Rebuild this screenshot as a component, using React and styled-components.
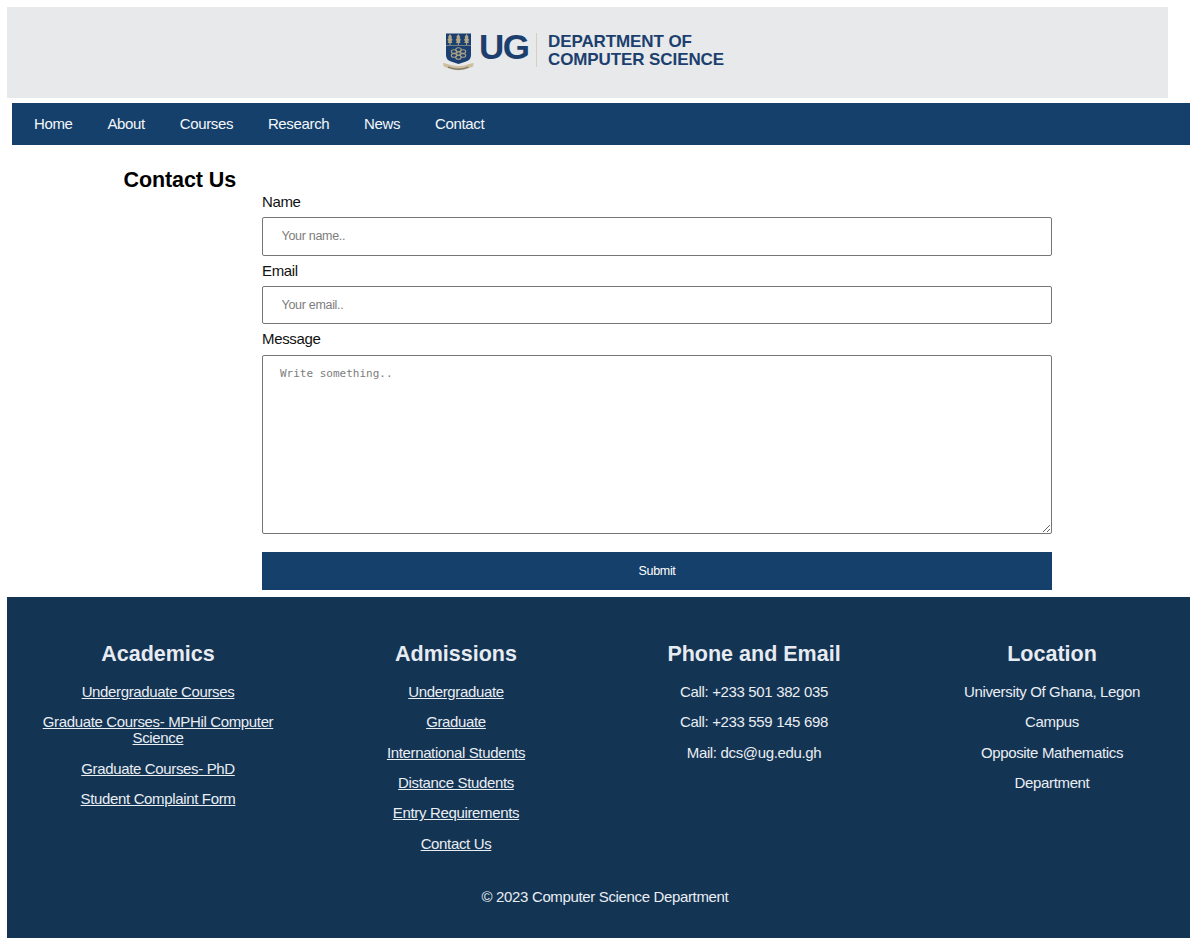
import React from "react";
import styled, { createGlobalStyle } from "styled-components";

const GlobalStyle = createGlobalStyle`
  * { box-sizing: border-box; }
  body {
    margin: 0;
    background: #fff;
    color: #111;
    font-family: "Liberation Sans", Arial, sans-serif;
    font-size: 15px;
    line-height: 16px;
    letter-spacing: -0.35px;
  }
`;

const Page = styled.div`
  padding: 7px 0 5px 7px;
  height: 943px;
  overflow: hidden;
`;

const Header = styled.header`
  width: 1161px;
  height: 91px;
  padding: 24px 0 0 435px;
  background: #e7e9eb;
  display: flex;
  align-items: flex-start;
  color: #1c3f6e;
  font-weight: bold;
`;

const Crest = styled.svg`
  width: 32px;
  height: 40px;
  flex: none;
`;

const Initials = styled.span`
  width: 57px;
  padding: 0 0 0 5px;
  font-size: 35px;
  line-height: 32px;
  letter-spacing: -1.5px;
`;

const Divider = styled.span`
  width: 1px;
  height: 34px;
  margin: 2px 11px 0 5px;
  background: #d6d0c0;
`;

const DepartmentName = styled.div`
  margin-top: 2px;
  font-size: 17px;
  line-height: 18px;
  letter-spacing: -0.1px;
  white-space: nowrap;
`;

const Nav = styled.nav`
  height: 42px;
  margin: 5px 0 0 5px;
  padding: 0 0 1px 22px;
  background: #14406b;
  display: flex;
  align-items: center;
  gap: 34.8px;
`;

const NavLink = styled.a`
  color: #f4f7fa;
`;

const Main = styled.main`
  height: 452px;
  padding: 23px 0 0 116.5px;
  display: flex;
  align-items: flex-start;
`;

const Title = styled.h2`
  width: 138.5px;
  margin: 0;
  color: #000;
  font-size: 21.5px;
  line-height: 24px;
  letter-spacing: -0.1px;
`;

const Form = styled.form`
  width: 790px;
  padding-top: 26px;
  display: flex;
  flex-direction: column;
`;

const Label = styled.label`
  height: 16px;
  line-height: 16px;
`;

const Input = styled.input`
  height: 38.6px;
  margin: 7px 0;
  padding: 0 18.5px;
  border: 1px solid #767676;
  border-radius: 2px;
  font: 12.5px "Liberation Sans", Arial, sans-serif;
  letter-spacing: -0.3px;
  &::placeholder { color: #7d7d7d; }
`;

const TextArea = styled.textarea`
  height: 179px;
  margin: 7.4px 0 18px;
  padding: 11px 17px;
  border: 1px solid #767676;
  border-radius: 2px;
  font: 11px/14px "DejaVu Sans Mono", monospace;
  letter-spacing: 0;
  resize: vertical;
  &::placeholder { color: #7d7d7d; }
`;

const Submit = styled.button`
  height: 38px;
  padding: 0;
  border: 0;
  background: #14406b;
  color: #fff;
  font: 12.5px "Liberation Sans", Arial, sans-serif;
  letter-spacing: -0.3px;
`;

const Footer = styled.footer`
  height: 341px;
  padding: 45px 0 0 2px;
  background: #143453;
  color: #e9eef3;
`;

const Columns = styled.div`
  display: grid;
  grid-template-columns: repeat(4, 298px);
  height: 247px;
`;

const Column = styled.section`
  padding: 0 27px;
  text-align: center;
`;

const ColumnTitle = styled.h2`
  margin: 0 0 18px;
  font-size: 21.5px;
  line-height: 24px;
  letter-spacing: 0;
  color: #e7ebf2;
`;

const Entry = styled.p`
  margin: 0 0 14.35px;
  text-decoration: ${(p) => (p.$link ? "underline" : "none")};
`;

const Copyright = styled.p`
  width: 1192px;
  margin: 0;
  text-align: center;
`;

const columns = [
  {
    title: "Academics",
    link: true,
    items: [
      "Undergraduate Courses",
      "Graduate Courses- MPHil Computer Science",
      "Graduate Courses- PhD",
      "Student Complaint Form",
    ],
  },
  {
    title: "Admissions",
    link: true,
    items: [
      "Undergraduate",
      "Graduate",
      "International Students",
      "Distance Students",
      "Entry Requirements",
      "Contact Us",
    ],
  },
  {
    title: "Phone and Email",
    items: ["Call: +233 501 382 035", "Call: +233 559 145 698", "Mail: dcs@ug.edu.gh"],
  },
  {
    title: "Location",
    items: ["University Of Ghana, Legon", "Campus", "Opposite Mathematics", "Department"],
  },
];

function UniversityCrest() {
  return (
    <Crest viewBox="0 0 32 40">
      <path d="M4 2.5H29V24Q29 29 24 30.5L16.5 33L9 30.5Q4 29 4 24Z" fill="#1b3f70" />
      {[8, 16.3, 24.6].map((x) => (
        <g key={x} fill="#b3a987">
          <path d={`M${x} 3L${x + 2} 6L${x + 1.3} 7L${x + 2.7} 9L${x + 1.5} 10L${x + 2.3} 12H${x - 2.3}L${x - 1.5} 10L${x - 2.7} 9L${x - 1.3} 7L${x - 2} 6Z`} />
          <rect x={x - 0.5} y="11" width="1" height="3" />
        </g>
      ))}
      <path d="M4 14.5H29" stroke="#8a8f88" strokeWidth="0.8" />
      <g fill="none" stroke="#a9a184" strokeWidth="1.1">
        <circle cx="16.5" cy="22.5" r="1.8" />
        <ellipse cx="16.5" cy="18.8" rx="2.8" ry="2" />
        <ellipse cx="16.5" cy="26.2" rx="2.8" ry="2" />
        <ellipse cx="12" cy="20.6" rx="2.7" ry="1.8" />
        <ellipse cx="21" cy="20.6" rx="2.7" ry="1.8" />
        <ellipse cx="12" cy="24.4" rx="2.7" ry="1.8" />
        <ellipse cx="21" cy="24.4" rx="2.7" ry="1.8" />
      </g>
      <path
        d="M0.8 32L4.5 32.8Q16.5 37.5 28 32.8L31.7 32L31 35.6L27.8 36.8Q16.5 41.8 5 36.8L1.8 35.6Z"
        fill="#cdbf9d"
      />
      <path d="M6 36.2Q16.5 40.2 26.5 36.2" fill="none" stroke="#817b6b" strokeWidth="1.4" />
    </Crest>
  );
}

export default function App() {
  return (
    <>
      <GlobalStyle />
      <Page>
        <Header>
          <UniversityCrest />
          <Initials>UG</Initials>
          <Divider />
          <DepartmentName>
            DEPARTMENT OF
            <br />
            COMPUTER SCIENCE
          </DepartmentName>
        </Header>
        <Nav>
          {["Home", "About", "Courses", "Research", "News", "Contact"].map((name) => (
            <NavLink key={name}>{name}</NavLink>
          ))}
        </Nav>
        <Main>
          <Title>Contact Us</Title>
          <Form>
            <Label htmlFor="name">Name</Label>
            <Input id="name" placeholder="Your name.." />
            <Label htmlFor="email">Email</Label>
            <Input id="email" placeholder="Your email.." />
            <Label htmlFor="message">Message</Label>
            <TextArea id="message" placeholder="Write something.." />
            <Submit type="button">Submit</Submit>
          </Form>
        </Main>
        <Footer>
          <Columns>
            {columns.map((column) => (
              <Column key={column.title}>
                <ColumnTitle>{column.title}</ColumnTitle>
                {column.items.map((item) => (
                  <Entry key={item} $link={column.link}>
                    {item}
                  </Entry>
                ))}
              </Column>
            ))}
          </Columns>
          <Copyright>© 2023 Computer Science Department</Copyright>
        </Footer>
      </Page>
    </>
  );
}
